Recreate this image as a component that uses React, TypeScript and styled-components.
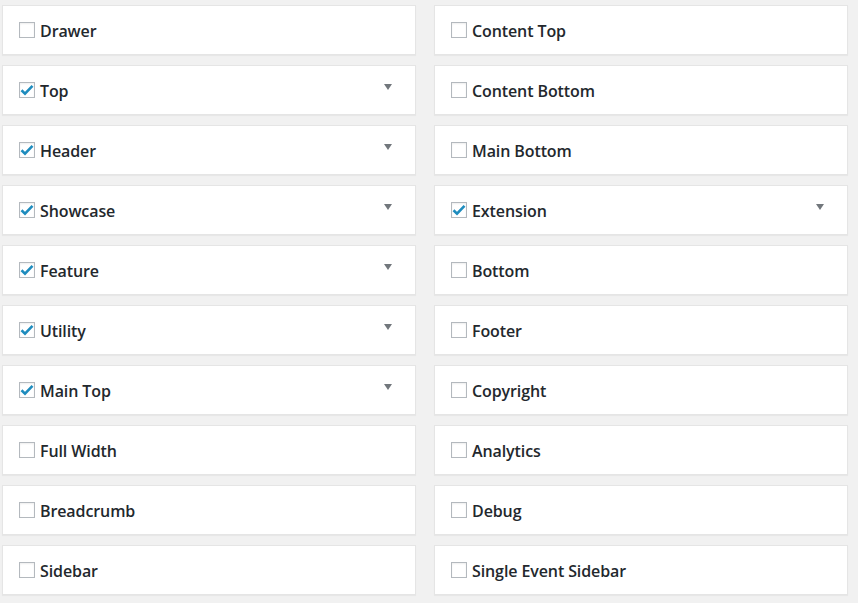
import React from "react";
import styled, { createGlobalStyle } from "styled-components";

interface Section {
    label: string;
    checked: boolean;
    expandable?: boolean;
}

const left: Section[] = [
    { label: "Drawer", checked: false },
    { label: "Top", checked: true, expandable: true },
    { label: "Header", checked: true, expandable: true },
    { label: "Showcase", checked: true, expandable: true },
    { label: "Feature", checked: true, expandable: true },
    { label: "Utility", checked: true, expandable: true },
    { label: "Main Top", checked: true, expandable: true },
    { label: "Full Width", checked: false },
    { label: "Breadcrumb", checked: false },
    { label: "Sidebar", checked: false },
];

const right: Section[] = [
    { label: "Content Top", checked: false },
    { label: "Content Bottom", checked: false },
    { label: "Main Bottom", checked: false },
    { label: "Extension", checked: true, expandable: true },
    { label: "Bottom", checked: false },
    { label: "Footer", checked: false },
    { label: "Copyright", checked: false },
    { label: "Analytics", checked: false },
    { label: "Debug", checked: false },
    { label: "Single Event Sidebar", checked: false },
];

const GlobalStyle = createGlobalStyle`
    html, body {
        margin: 0;
        background: #f1f1f1;
    }
    body {
        font-family: "Open Sans", "Noto Sans", sans-serif;
        color: #23282d;
    }
`;

const Page = styled.div`
    display: grid;
    grid-template-columns: 414px 414px;
    column-gap: 18px;
    padding: 5px 0 0 2px;
    height: 598px;
    box-sizing: border-box;
`;

const Column = styled.div`
    display: flex;
    flex-direction: column;
    gap: 10px;
`;

const Card = styled.div`
    height: 50px;
    box-sizing: border-box;
    background: #fff;
    border: 1px solid #e5e5e5;
    box-shadow: 0 1px 1px rgba(0, 0, 0, 0.04);
    display: flex;
    align-items: center;
    padding: 0 23px 0 16px;
`;

const Box = styled.span`
    width: 16px;
    height: 16px;
    box-sizing: border-box;
    border: 1px solid #b4b9be;
    background: #fff;
    box-shadow: inset 0 1px 2px rgba(0, 0, 0, 0.07);
    display: flex;
    align-items: center;
    justify-content: center;
    flex-shrink: 0;
    margin-right: 5px;
`;

const Label = styled.span`
    font-size: 16px;
    font-weight: 600;
    letter-spacing: -0.1px;
    flex: 1;
    line-height: 20px;
    padding-top: 2px;
`;

const Arrow = styled.span`
    width: 0;
    height: 0;
    border-left: 4px solid transparent;
    border-right: 4px solid transparent;
    border-top: 6px solid #72777c;
    margin-top: -6px;
`;

const Check = () => (
    <svg width="14" height="12" viewBox="0 0 14 12">
        <path d="M1.5 6.2 L5 9.6 L12.5 1.8" fill="none" stroke="#1e8cbe" strokeWidth="2.6" />
    </svg>
);

const Row = ({ item }: { item: Section }) => (
    <Card>
        <Box>{item.checked && <Check />}</Box>
        <Label>{item.label}</Label>
        {item.expandable && <Arrow />}
    </Card>
);

const App = () => (
    <>
        <GlobalStyle />
        <Page>
            <Column>
                {left.map((s) => (
                    <Row key={s.label} item={s} />
                ))}
            </Column>
            <Column>
                {right.map((s) => (
                    <Row key={s.label} item={s} />
                ))}
            </Column>
        </Page>
    </>
);

export default App;
